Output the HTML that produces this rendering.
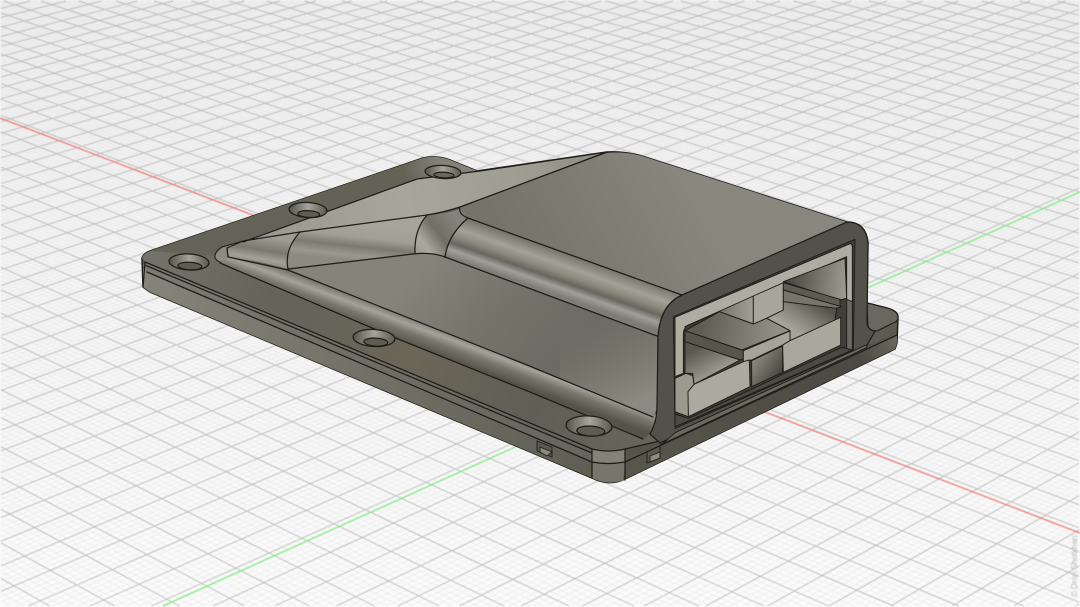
<!DOCTYPE html>
<html><head><meta charset="utf-8"><title>Enclosure CAD model</title>
<style>
html,body{margin:0;padding:0;background:#f6f6f6;width:1080px;height:607px;overflow:hidden}
#wrap{position:relative;width:1080px;height:607px;overflow:hidden}
svg{position:absolute;left:0;top:0;display:block}
#grid{filter:blur(.5px)}
#part{filter:blur(.3px)}
.e{fill:none;stroke:#1e1d18;stroke-width:1.25;stroke-linejoin:round;stroke-linecap:round}
.c polygon,.c path{stroke:#1e1d18;stroke-width:2.8;stroke-linejoin:round}
</style></head>
<body>
<div id="wrap">
<svg id="grid" width="1080" height="607" viewBox="0 0 1080 607">
<defs><linearGradient id="bg" x1="0" y1="0" x2="0" y2="1"><stop offset="0" stop-color="#f0f0f0"/><stop offset=".5" stop-color="#f6f6f6"/><stop offset="1" stop-color="#fbfbfb"/></linearGradient></defs>
<rect width="1080" height="607" fill="url(#bg)"/>
<path id="mi" fill="none" stroke="#e6e6e6" stroke-width=".55"/>
<path id="ma" fill="none" stroke="#bababa" stroke-width=".95"/>
<line x1="0" y1="118" x2="1080" y2="533" stroke="#ee7272" stroke-width="1.25"/>
<line x1="163" y1="606" x2="1080" y2="192" stroke="#78ea78" stroke-width="1.25"/>
<text transform="translate(1077 597) rotate(-90)" font-family="Liberation Sans, sans-serif" font-size="8" fill="#b6b6b6">© Dron Shotkhan</text>
</svg>
<script>
(function(){
var a=.00889,b=.00937,Ox=673,Oy=376,Rx=-2477,Gx=3345,H=-833,ou=.214,ov=.17;
function P(u,v){var A=a*u,B=b*v,W=A+B+1;return [(A*Rx+B*Gx+Ox)/W,(A*H+B*H+Oy)/W];}
function seg(p,q){
 var t0=0,t1=1,dx=q[0]-p[0],dy=q[1]-p[1],cs=[[-dx,p[0]-1],[dx,1079-p[0]],[-dy,p[1]-1],[dy,606-p[1]]];
 for(var i=0;i<4;i++){var c=cs[i];
  if(c[0]===0){if(c[1]<0)return '';continue;}
  var r=c[1]/c[0];
  if(c[0]<0){if(r>t1)return '';if(r>t0)t0=r;}else{if(r<t0)return '';if(r<t1)t1=r;}
 }
 return 'M'+(p[0]+t0*dx).toFixed(1)+' '+(p[1]+t0*dy).toFixed(1)+'L'+(p[0]+t1*dx).toFixed(1)+' '+(p[1]+t1*dy).toFixed(1);
}
var mi='',ma='';
for(var k=-500;k<=1000;k++){
 var t=k/5,maj=(k%5===0),s='';
 var u=t+ou,v1=(-.35-a*u)/b,v2=(2.5-a*u)/b;
 s+=seg(P(u,v1),P(u,v2));
 var v=t+ov,u1=(-.35-b*v)/a,u2=(2.5-b*v)/a;
 s+=seg(P(u1,v),P(u2,v));
 if(maj)ma+=s;else mi+=s;
}
document.getElementById('mi').setAttribute('d',mi);
document.getElementById('ma').setAttribute('d',ma);
})();
</script>
<svg id="part" width="1080" height="607" viewBox="0 0 1080 607">
<defs>
<linearGradient id="gPlate" gradientUnits="userSpaceOnUse" x1="145" y1="262" x2="640" y2="420">
<stop offset="0" stop-color="#74736a"/><stop offset=".25" stop-color="#65645a"/><stop offset=".55" stop-color="#6a6658"/><stop offset=".8" stop-color="#605f55"/><stop offset="1" stop-color="#66655c"/></linearGradient>
<linearGradient id="gBack" gradientUnits="userSpaceOnUse" x1="250" y1="210" x2="440" y2="160">
<stop offset="0" stop-color="#646358"/><stop offset=".8" stop-color="#636255"/><stop offset="1" stop-color="#848378"/></linearGradient>
<linearGradient id="gSide1" gradientUnits="userSpaceOnUse" x1="145" y1="262" x2="592" y2="450">
<stop offset="0" stop-color="#7c7b72"/><stop offset=".5" stop-color="#6f6e65"/><stop offset="1" stop-color="#67665e"/></linearGradient>
<linearGradient id="gSide2" gradientUnits="userSpaceOnUse" x1="145" y1="272" x2="592" y2="470">
<stop offset="0" stop-color="#85847a"/><stop offset=".5" stop-color="#727167"/><stop offset="1" stop-color="#5f5e55"/></linearGradient>
<linearGradient id="gLoft" gradientUnits="userSpaceOnUse" x1="240" y1="240" x2="607" y2="155">
<stop offset="0" stop-color="#98978c"/><stop offset=".45" stop-color="#a7a69b"/><stop offset=".8" stop-color="#9d9c91"/><stop offset="1" stop-color="#8c8b80"/></linearGradient>
<linearGradient id="gTop" gradientUnits="userSpaceOnUse" x1="520" y1="260" x2="680" y2="170">
<stop offset="0" stop-color="#75746b"/><stop offset=".5" stop-color="#7e7d74"/><stop offset="1" stop-color="#88877e"/></linearGradient>
<linearGradient id="gStrip" gradientUnits="userSpaceOnUse" x1="560" y1="251" x2="546" y2="291">
<stop offset="0" stop-color="#75736a"/><stop offset=".3" stop-color="#a4a297"/><stop offset=".5" stop-color="#8a887b"/><stop offset=".66" stop-color="#68675e"/><stop offset=".82" stop-color="#a09f98"/><stop offset="1" stop-color="#7d7c75"/></linearGradient>
<linearGradient id="gRidge" gradientUnits="userSpaceOnUse" x1="357" y1="224" x2="353" y2="261">
<stop offset="0" stop-color="#a6a59a"/><stop offset=".35" stop-color="#a09f94"/><stop offset=".6" stop-color="#7c7a6f"/><stop offset=".85" stop-color="#9a9990"/><stop offset="1" stop-color="#8c8b82"/></linearGradient>
<linearGradient id="gCone" gradientUnits="userSpaceOnUse" x1="262" y1="236" x2="257" y2="266">
<stop offset="0" stop-color="#9e9d92"/><stop offset=".45" stop-color="#7b796e"/><stop offset=".75" stop-color="#a3a297"/><stop offset="1" stop-color="#868579"/></linearGradient>
<linearGradient id="gCorner" gradientUnits="userSpaceOnUse" x1="458" y1="222" x2="418" y2="252">
<stop offset="0" stop-color="#84827a"/><stop offset=".45" stop-color="#716f65"/><stop offset=".8" stop-color="#a9a89e"/><stop offset="1" stop-color="#a09f95"/></linearGradient>
<linearGradient id="gWall" gradientUnits="userSpaceOnUse" x1="430" y1="255" x2="560" y2="370">
<stop offset="0" stop-color="#85847b"/><stop offset=".5" stop-color="#75746b"/><stop offset="1" stop-color="#6b6a62"/></linearGradient>
<linearGradient id="gWall2" gradientUnits="userSpaceOnUse" x1="590" y1="310" x2="640" y2="400">
<stop offset="0" stop-color="#76756b" stop-opacity="0"/><stop offset="1" stop-color="#8f8e85" stop-opacity=".9"/></linearGradient>
<linearGradient id="gLow" gradientUnits="userSpaceOnUse" x1="440" y1="325" x2="430" y2="352">
<stop offset="0" stop-color="#6a695d"/><stop offset=".35" stop-color="#a4a398"/><stop offset=".62" stop-color="#77766a"/><stop offset="1" stop-color="#55544a"/></linearGradient>
<linearGradient id="gHole" x1="0" y1="0" x2="1" y2="0">
<stop offset="0" stop-color="#55544a"/><stop offset=".5" stop-color="#a6a59a"/><stop offset="1" stop-color="#5a594e"/></linearGradient>
<linearGradient id="gStrip2" gradientUnits="userSpaceOnUse" x1="627" y1="458" x2="897" y2="335">
<stop offset="0" stop-color="#57564c"/><stop offset=".85" stop-color="#4b4a42"/><stop offset="1" stop-color="#6c6b61"/></linearGradient>
<linearGradient id="gIn1" gradientUnits="userSpaceOnUse" x1="210" y1="320" x2="400" y2="320">
<stop offset="0" stop-color="#4f4e45"/><stop offset="1" stop-color="#a2a196"/></linearGradient>
<linearGradient id="gIn2" gradientUnits="userSpaceOnUse" x1="240" y1="410" x2="290" y2="500">
<stop offset="0" stop-color="#5a594f"/><stop offset="1" stop-color="#a3a297"/></linearGradient>
<linearGradient id="gIn3" gradientUnits="userSpaceOnUse" x1="500" y1="220" x2="670" y2="240">
<stop offset="0" stop-color="#47463e"/><stop offset="1" stop-color="#9a988e"/></linearGradient>
<linearGradient id="gPlatL" gradientUnits="userSpaceOnUse" x1="240" y1="350" x2="470" y2="390">
<stop offset="0" stop-color="#5e5d53"/><stop offset=".6" stop-color="#7d7c71"/><stop offset="1" stop-color="#938f84"/></linearGradient>
<linearGradient id="gPlatR" gradientUnits="userSpaceOnUse" x1="600" y1="285" x2="540" y2="375">
<stop offset="0" stop-color="#55544b"/><stop offset=".55" stop-color="#85847a"/><stop offset="1" stop-color="#a6a59a"/></linearGradient>
<linearGradient id="gGap" gradientUnits="userSpaceOnUse" x1="410" y1="440" x2="480" y2="490">
<stop offset="0" stop-color="#8a897f"/><stop offset="1" stop-color="#4a4941"/></linearGradient>
</defs>

<!-- silhouette -->
<path d="M142 258Q143 254 150 251L423 158Q437 155 450 160L477 171L607 152Q627 151 645 157L847 222Q866 222 868 243L867 303L887 308Q898 311 898 317L897 343L895 349L623 480Q607 486 592 478L150 292L143 287Z" fill="#5c5b51" stroke="#1e1d18" stroke-width="1.5" stroke-linejoin="round"/>

<!-- plate top -->
<path d="M145 262L142 258Q143 254 150 251L423 158Q437 155 450 160L477 171L470 200L300 260L660 420L660 442L625 450Q610 453 592 450Z" fill="url(#gPlate)"/>
<path d="M150 251L423 158Q437 155 450 160L477 171L417 179L243 242L215 256Z" fill="url(#gBack)"/>
<!-- plate sides -->
<polygon points="145,262 592,449 592,462 147,272 143,266" fill="url(#gSide1)"/>
<polygon points="147,272 592,462 592,478 150,292 143,287 143,268" fill="url(#gSide2)"/>
<path d="M592 449Q608 453 625 449L625 462Q608 465 592 462Z" fill="#84837a"/>
<path d="M592 462Q608 465 625 462L625 480Q607 486 592 478Z" fill="#77766d"/>
<polygon points="625,449 660,440 673,437 867,345 897,335 627,458" fill="#55544b"/>
<polygon points="626,458 897,335 897,343 895,349 623,480" fill="url(#gStrip2)"/>

<!-- flange right -->
<path d="M867 303L887 308Q898 311 898 317Q898 322 893 323L877 331Q870 332 868 328Z" fill="#69685e" stroke="#1e1d18" stroke-width="1.1"/>

<!-- loft -->
<path d="M243 242L417 179L480 171L607 152L460 207Q445 212 425 215L300 232Z" fill="url(#gLoft)"/>
<!-- top face -->
<path d="M460 207L607 153Q627 151 645 157L847 222L682 295L468 218Q458 214 460 207Z" fill="url(#gTop)"/>
<!-- wall -->
<path d="M288 270L413 254Q432 252 445 257L657 336L657 405Q656 412 653 417L527 365Z" fill="url(#gWall)"/>
<path d="M560 300L657 336L657 405Q656 412 653 417L560 378Z" fill="url(#gWall2)"/>
<!-- fillet strip -->
<path d="M468 218L682 295Q664 302 660 323L657 336L445 257Q448 235 468 218Z" fill="url(#gStrip)"/>
<!-- corner -->
<path d="M427 215Q445 214 460 209L468 218Q450 235 445 257Q430 252 415 253Q414 230 427 215Z" fill="url(#gCorner)"/>
<!-- ridge -->
<path d="M300 232L427 215Q414 230 415 253L288 269Q284 250 300 232Z" fill="url(#gRidge)"/>
<!-- cone -->
<path d="M227 248L243 241L300 232Q284 250 288 269L260 262L228 257Z" fill="url(#gCone)"/>
<!-- recess -->
<path d="M243 241L222 247Q214 252 215 258Q218 263 226 263L228 257L227 248Z" fill="#8d8c80" stroke="#1e1d18" stroke-width="1.1"/>
<!-- lower fillet -->
<path d="M228 257L288 270L527 365L653 417Q660 408 658 423Q655 431 643 439L530 392L393 337L220 263Z" fill="url(#gLow)"/>

<!-- edges -->
<g class="e">
<path d="M145 262L592 449M146 265.5L592 453M147 272L592 462"/>
<path d="M592 449Q608 453 625 449L660 441M592 462Q608 465 625 462L897 335M592 449V478M625 449V480"/>
<path d="M243 242L417 179L480 171L607 152L460 207Q445 212 427 215L300 232L243 241"/>
<path d="M460 207Q458 214 468 218L682 295"/>
<path d="M445 257L657 336M288 270L527 365L653 417"/>
<path d="M288 269L413 254Q432 252 445 257"/>
<path d="M300 232Q284 250 288 269M427 215Q414 230 415 253M468 218Q448 235 445 257"/>
<path d="M220 263L393 337L530 392L643 439"/>
<path d="M227 248L228 257L288 270"/>
<path d="M145 262L143 287"/>
</g>

<!-- holes -->
<g stroke="#1e1d18" stroke-width="1.25">
<g transform="rotate(3 189 262)"><ellipse cx="189" cy="262" rx="20" ry="8" fill="url(#gHole)"/><ellipse cx="190" cy="266" rx="12" ry="3.8" fill="#5e5d52"/></g>
<g transform="rotate(3 308 210)"><ellipse cx="308" cy="210" rx="19" ry="7.5" fill="url(#gHole)"/><ellipse cx="309" cy="214" rx="11" ry="3.4" fill="#5e5d52"/></g>
<g transform="rotate(3 443 172)"><ellipse cx="443" cy="172" rx="18" ry="6.5" fill="url(#gHole)"/><ellipse cx="444" cy="175" rx="10" ry="2.8" fill="#68675b"/></g>
<g transform="rotate(3 374 338)"><ellipse cx="374" cy="338" rx="21" ry="8.5" fill="url(#gHole)"/><ellipse cx="376" cy="342" rx="12" ry="4" fill="#5e5d52"/></g>
<g transform="rotate(3 589 426)"><ellipse cx="589" cy="426" rx="23" ry="10" fill="url(#gHole)"/><ellipse cx="591" cy="431" rx="14" ry="5" fill="#5e5d52"/></g>
</g>

<!-- clips -->
<g fill="#5a5950" stroke="#1e1d18" stroke-width=".9">
<polygon points="537,441 552,447 552,457 537,451"/>
<polygon points="540,447 552,452 547,456 540,452" fill="#8c8b80"/>
<polygon points="647,452 660,446 660,458 647,463"/>
<polygon points="650,456 660,452 660,458 650,462" fill="#8c8b80"/>
</g>

<!-- frame -->
<path d="M682 295L847 222Q866 222 868 243L867 323Q868 330 875 331L867 345L673 437L660 443L650 434Q657 422 657 405L658 337Q660 305 682 295Z" fill="#53524a" stroke="#1e1d18" stroke-width="1.25"/>

<!-- connector interior in zoom coords -->
<g class="c" transform="translate(620 210) scale(.33333)">
<polygon points="160,320 705,88 700,420 165,655" fill="#3f3e37"/>
<polygon points="680,140 697,105 697,420 680,420" fill="#6a695f"/>
<path d="M165 322L693 100L697 108L697 275L680 268L680 140L205 345Q190 352 190 375L190 490L165 500Z" fill="#aeada2"/>
<!-- left upper opening -->
<polygon points="195,350 400,258 400,342 298,305" fill="url(#gIn1)"/>
<!-- centre block -->
<polygon points="400,258 490,218 490,300 440,325 400,342" fill="#a7a69b"/>
<!-- right upper opening -->
<polygon points="490,215 675,145 680,265 660,270" fill="url(#gIn3)"/>
<polygon points="490,218 660,268 660,290 490,240" fill="#5e5d53"/>
<polygon points="490,240 665,290 648,295 490,275" fill="#77766c"/>
<!-- right platform + notch -->
<polygon points="440,325 490,300 490,275 650,295 645,330 510,392 510,362" fill="url(#gPlatR)"/>
<!-- left platform -->
<polygon points="195,362 298,305 400,342 440,325 510,362 365,420" fill="url(#gPlatL)"/>
<polygon points="195,362 365,420 370,422 370,445 360,450 195,395" fill="#57564c"/>
<!-- left lower opening -->
<polygon points="195,395 360,450 222,523 218,490 195,490" fill="url(#gIn2)"/>
<!-- light faces -->
<polygon points="370,422 510,363 510,392 488,405 395,450 370,455" fill="#a5a49a"/>
<polygon points="222,523 370,455 388,450 390,530 205,620 203,545" fill="#abaa9f"/>
<polygon points="165,505 198,490 218,497 222,523 204,545 205,620 165,605" fill="#9b9a8f"/>
<polygon points="395,452 488,408 488,487 395,530" fill="url(#gGap)" stroke="none"/>
<polygon points="488,405 510,392 645,330 662,322 662,405 490,487" fill="#a9a89d"/>
<!-- floor -->
<polygon points="165,612 205,625 395,538 490,492 665,412 697,420 165,650" fill="#4b4a42"/>
<polygon points="130,700 165,668 738,405 742,412 120,705" fill="#6a695e" stroke-width="1.5"/>
</g>

</svg>
</div>
</body></html>
